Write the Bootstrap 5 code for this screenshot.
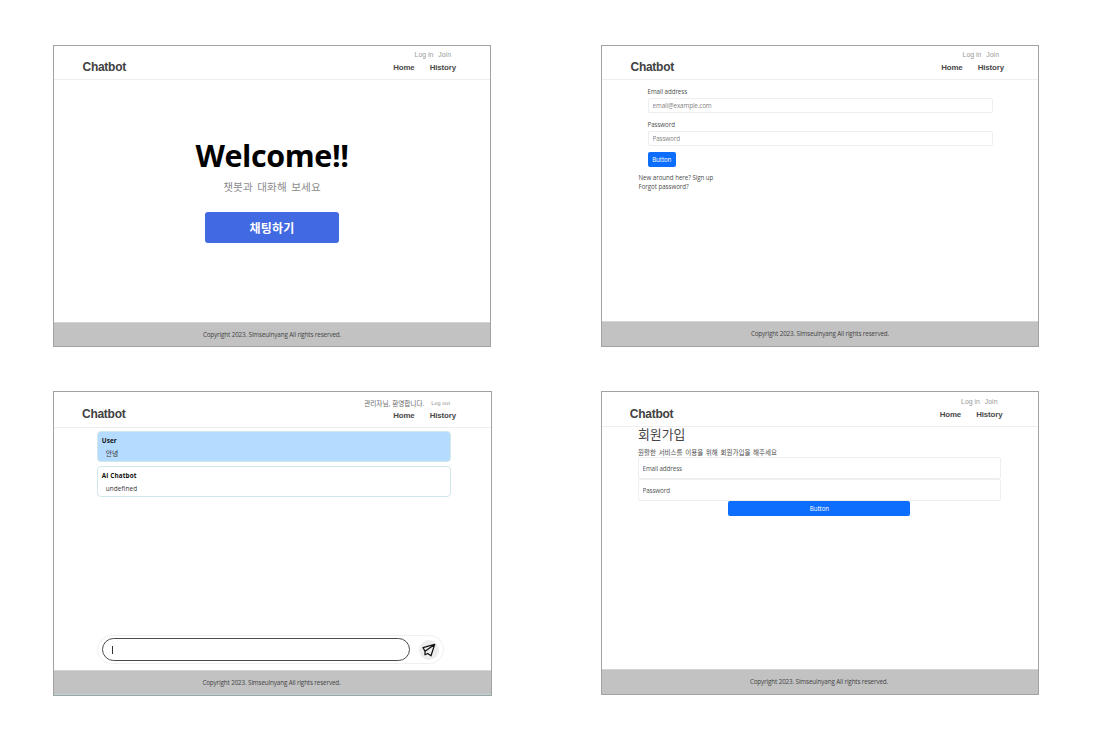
<!DOCTYPE html>
<html lang="ko">
<head>
<meta charset="utf-8">
<meta name="viewport" content="width=device-width, initial-scale=1">
<title>Chatbot</title>
<link href="https://cdn.jsdelivr.net/npm/bootstrap@5.3.0/dist/css/bootstrap.min.css" rel="stylesheet">
<style>
body{background:#fff;font-family:"Open Sans","Noto Sans CJK KR",sans-serif;font-size:6.2px;line-height:10px;letter-spacing:-.05px;color:#4d4d4d;overflow:hidden}
.board{display:grid;grid-template-columns:439px 438px;grid-template-rows:302px 305px;column-gap:109px;row-gap:44px;padding:45px 0 0 53px;align-items:start}
.screen{border:1px solid #a2a2a2;width:438px;height:302px;white-space:nowrap}
.screen-chat{width:439px;height:305px}
.screen-join{height:304px}
.topbar{height:34px;border-bottom:1px solid #eee;font-family:"Liberation Sans","Noto Sans CJK KR",sans-serif;letter-spacing:0;padding:4px 34px 0 28.5px}
.screen-chat .topbar{height:36px;padding:7px 35px 0 28px}
.screen-join .topbar{height:35px;padding:5px 35.5px 0 27.8px}
.brand-name{font-size:12px;line-height:14px;font-weight:700;letter-spacing:-.27px;color:#414141;margin-top:10px}
.screen-chat .brand-name{margin-top:8px}
.user-links{font-size:6.9px;line-height:9px;color:#999;gap:5px;padding-right:5px}
.main-links{font-size:7.9px;line-height:10px;font-weight:700;letter-spacing:-.12px;color:#4a4a4a;gap:15px;margin-top:4px}
.screen-chat .main-links{margin-top:3px}
.screen-chat .user-links{padding-right:6px;gap:7px}
.greeting{font-size:6.6px;color:#666}
.logout{font-size:5.6px}
.foot{height:24px;background:#c2c2c2;border-top:1px solid #d4d4d4;font-size:6.3px;line-height:24px;letter-spacing:-.13px;color:#444}
.screen-chat .foot{height:25px;border-bottom:1px solid #b4d5de;padding-right:2px}
.screen-join .foot{height:25px;padding-right:2px}
.hero-title{font-size:30.5px;line-height:40px;font-weight:700;letter-spacing:-.4px;color:#000;margin-top:55px}
.hero-sub{font-size:10.6px;line-height:16px;letter-spacing:.1px;word-spacing:1.6px;color:#8c8c8c;margin-top:4px}
.hero-btn{width:134px;height:31px;background:#4169e1;color:#fff;font-size:12px;line-height:33px;letter-spacing:.2px;font-weight:700;border-radius:3px;margin-top:17px}
.login-form{padding:7px 45px 0 45.5px}
.field{font-size:6.3px;line-height:10px;height:15px;letter-spacing:-.12px;padding:0 4px;border:1px solid #eee;border-radius:2px;color:#555}
.field::placeholder{color:#858585}
.btn-small{background:#0d6efd;color:#fff;font-size:6.2px;line-height:15px;height:15px;width:28.5px;letter-spacing:-.1px;border-radius:2px}
.more-links{padding-left:36.5px;line-height:9.4px;margin-top:6px}
.chat-log{padding:3px 40px 0 43px}
.bubble{height:31px;border:1px solid #d0e8ea;border-radius:4px;padding:4px 0 0 3.7px;letter-spacing:.12px;color:#333}
.bubble-user{background:#b5dbff;margin-bottom:3.5px}
.bubble .who{font-size:6.4px;font-weight:700;color:#111;line-height:10px}
.bubble .said{font-size:6.4px;padding-left:4px;line-height:10px;margin-top:3px}
.bubble-user .said{font-size:6.8px}
.composer{width:347px;height:29px;border:1px solid #f0f0f0;border-radius:15px;margin:0 0 6px 43px;padding:0 4px}
.composer-box{width:308px;height:22.5px;border:1.3px solid #4c4c4c;border-radius:12px;padding-left:8.7px}
.caret{width:1px;height:8px;background:#333}
.send{width:20px;height:20px;border-radius:50%;background:#ededed;margin-left:9px}
.join-form{padding:0 37px 0 36px}
.join-title{font-size:12.9px;line-height:15px;letter-spacing:0;color:#444}
.join-sub{font-size:6.5px;line-height:10px;letter-spacing:0;word-spacing:1px;margin:6px 0 -1px}
.join-form .field{height:22px;padding:0 3.5px}
.join-form .field::placeholder{color:#555}
.join-form .join-btn{width:182px;margin-left:90.4px}
</style>
</head>
<body>
<main class="board">
  <section class="screen d-flex flex-column">
    <header class="topbar d-flex justify-content-between flex-shrink-0">
      <div class="brand-name">Chatbot</div>
      <nav class="d-flex flex-column">
        <div class="user-links d-flex justify-content-end"><span>Log in</span><span>Join</span></div>
        <div class="main-links d-flex justify-content-end"><span>Home</span><span>History</span></div>
      </nav>
    </header>
    <div class="flex-grow-1 d-flex flex-column align-items-center">
      <div class="hero-title">Welcome!!</div>
      <div class="hero-sub">챗봇과 대화해 보세요</div>
      <button class="btn hero-btn border-0 p-0">채팅하기</button>
    </div>
    <footer class="foot text-center flex-shrink-0"><span class="copy">Copyright 2023. Simseulnyang All rights reserved.</span></footer>
  </section>

  <section class="screen d-flex flex-column">
    <header class="topbar d-flex justify-content-between flex-shrink-0">
      <div class="brand-name">Chatbot</div>
      <nav class="d-flex flex-column">
        <div class="user-links d-flex justify-content-end"><span>Log in</span><span>Join</span></div>
        <div class="main-links d-flex justify-content-end"><span>Home</span><span>History</span></div>
      </nav>
    </header>
    <div class="flex-grow-1">
      <form class="login-form d-flex flex-column align-items-start">
        <label class="mb-0">Email address</label>
        <input class="form-control field" style="margin-top:1px" type="email" placeholder="email@example.com">
        <label style="margin-top:7px">Password</label>
        <input class="form-control field" style="margin-top:1px" type="password" placeholder="Password">
        <button type="button" class="btn btn-small border-0 p-0" style="margin-top:6px">Button</button>
      </form>
      <div class="more-links"><div>New around here? Sign up</div><div>Forgot password?</div></div>
    </div>
    <footer class="foot text-center flex-shrink-0" style="height:25px"><span class="copy">Copyright 2023. Simseulnyang All rights reserved.</span></footer>
  </section>

  <section class="screen screen-chat d-flex flex-column">
    <header class="topbar d-flex justify-content-between flex-shrink-0">
      <div class="brand-name">Chatbot</div>
      <nav class="d-flex flex-column">
        <div class="user-links d-flex justify-content-end"><span class="greeting">관리자님, 환영합니다.</span><span class="logout">Log out</span></div>
        <div class="main-links d-flex justify-content-end"><span>Home</span><span>History</span></div>
      </nav>
    </header>
    <div class="chat-log flex-grow-1">
      <div class="bubble bubble-user"><div class="who">User</div><div class="said">안녕</div></div>
      <div class="bubble"><div class="who">AI Chatbot</div><div class="said">undefined</div></div>
    </div>
    <div class="composer d-flex align-items-center flex-shrink-0">
      <div class="composer-box d-flex align-items-center"><span class="caret"></span></div>
      <div class="send d-flex align-items-center justify-content-center">
        <svg width="14" height="14" viewBox="0 0 14 14" fill="none" stroke="#111" stroke-width="1.25" stroke-linejoin="round" stroke-linecap="round"><path d="M12.7 1.4 1 4.6 3 8.2 3 11.8 5.7 10.5 9 12.8ZM12.7 1.4 3 8.2"/></svg>
      </div>
    </div>
    <footer class="foot text-center flex-shrink-0"><span class="copy">Copyright 2023. Simseulnyang All rights reserved.</span></footer>
  </section>

  <section class="screen screen-join d-flex flex-column">
    <header class="topbar d-flex justify-content-between flex-shrink-0">
      <div class="brand-name">Chatbot</div>
      <nav class="d-flex flex-column">
        <div class="user-links d-flex justify-content-end"><span>Log in</span><span>Join</span></div>
        <div class="main-links d-flex justify-content-end"><span>Home</span><span>History</span></div>
      </nav>
    </header>
    <form class="join-form flex-grow-1 d-flex flex-column">
      <div class="join-title">회원가입</div>
      <p class="join-sub">원활한 서비스를 이용을 위해 회원가입을 해주세요</p>
      <input class="form-control field mt-0" type="email" placeholder="Email address">
      <input class="form-control field" type="password" placeholder="Password">
      <button type="button" class="btn btn-small join-btn border-0 p-0">Button</button>
    </form>
    <footer class="foot text-center flex-shrink-0"><span class="copy">Copyright 2023. Simseulnyang All rights reserved.</span></footer>
  </section>
</main>
<script src="https://cdn.jsdelivr.net/npm/bootstrap@5.3.0/dist/js/bootstrap.bundle.min.js"></script>
</body>
</html>
